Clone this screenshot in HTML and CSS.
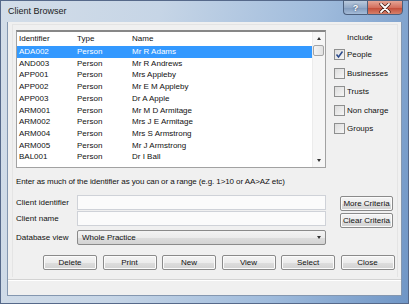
FILE: index.html
```html
<!DOCTYPE html>
<html>
<head>
<meta charset="utf-8">
<link rel="stylesheet" href="styles.css">
</head>
<body>
<div class="window">
  <div class="titlebar">
    <span class="title">Client Browser</span>
    <div class="caption">
      <div class="cap-btn help">?</div>
      <div class="cap-btn close">
        <svg width="12" height="10" viewBox="0 0 12 10"><path d="M2 1 L10 9 M10 1 L2 9" stroke="#3a1510" stroke-width="3.2" stroke-linecap="round"/><path d="M2 1 L10 9 M10 1 L2 9" stroke="#fff" stroke-width="1.8" stroke-linecap="round"/></svg>
      </div>
    </div>
  </div>
  <div class="client">
    <div class="main">
      <div class="top">
        <div class="listbox">
          <div class="list">
            <div class="head"><span class="c1">Identifier</span><span class="c2">Type</span><span class="c3">Name</span></div>
            <div class="row sel"><span class="c1">ADA002</span><span class="c2">Person</span><span class="c3">Mr R Adams</span></div>
            <div class="row"><span class="c1">AND003</span><span class="c2">Person</span><span class="c3">Mr R Andrews</span></div>
            <div class="row"><span class="c1">APP001</span><span class="c2">Person</span><span class="c3">Mrs Appleby</span></div>
            <div class="row"><span class="c1">APP002</span><span class="c2">Person</span><span class="c3">Mr E M Appleby</span></div>
            <div class="row"><span class="c1">APP003</span><span class="c2">Person</span><span class="c3">Dr A Apple</span></div>
            <div class="row"><span class="c1">ARM001</span><span class="c2">Person</span><span class="c3">Mr M D Armitage</span></div>
            <div class="row"><span class="c1">ARM002</span><span class="c2">Person</span><span class="c3">Mrs J E Armitage</span></div>
            <div class="row"><span class="c1">ARM004</span><span class="c2">Person</span><span class="c3">Mrs S Armstrong</span></div>
            <div class="row"><span class="c1">ARM005</span><span class="c2">Person</span><span class="c3">Mr J Armstrong</span></div>
            <div class="row"><span class="c1">BAL001</span><span class="c2">Person</span><span class="c3">Dr I Ball</span></div>
          </div>
          <div class="vscroll">
            <div class="sb-btn"><span class="arr up"></span></div>
            <div class="thumb"></div>
            <div class="track"></div>
            <div class="sb-btn"><span class="arr down"></span></div>
          </div>
        </div>
        <div class="include">
          <div class="inc-title">Include</div>
          <div class="checks">
            <div class="chk-row"><span class="box checked"><svg width="9" height="9" viewBox="0 0 9 9"><path d="M1.5 4.5 L3.5 7 L7.5 1.5" fill="none" stroke="#2b4a8c" stroke-width="1.5"/></svg></span><span>People</span></div>
            <div class="chk-row"><span class="box"></span><span>Businesses</span></div>
            <div class="chk-row"><span class="box"></span><span>Trusts</span></div>
            <div class="chk-row"><span class="box"></span><span>Non charge</span></div>
            <div class="chk-row"><span class="box"></span><span>Groups</span></div>
          </div>
        </div>
      </div>
      <div class="hint">Enter as much of the identifier as you can or a range (e.g. 1&gt;10 or AA&gt;AZ etc)</div>
      <div class="form">
        <div class="fields">
          <div class="field-row"><span class="lbl">Client identifier</span><div class="input"></div></div>
          <div class="field-row"><span class="lbl">Client name</span><div class="input"></div></div>
          <div class="field-row sel-row"><span class="lbl">Database view</span><div class="select"><span>Whole Practice</span><span class="arr down"></span></div></div>
        </div>
        <div class="side">
          <div class="btn side-btn">More Criteria</div>
          <div class="btn side-btn">Clear Criteria</div>
        </div>
      </div>
      <div class="buttons">
        <div class="btn">Delete</div>
        <div class="btn">Print</div>
        <div class="btn">New</div>
        <div class="btn">View</div>
        <div class="btn">Select</div>
        <div class="btn">Close</div>
      </div>
    </div>
    <div class="status"></div>
  </div>
</div>
</body>
</html>
```

FILE: styles.css
```css
* { box-sizing: border-box; }
body {
  margin: 0;
  width: 409px;
  height: 304px;
  overflow: hidden;
  font-family: "Liberation Sans", Arial, sans-serif;
  font-size: 8px;
  color: #000;
}
.window {
  width: 409px;
  height: 304px;
  border: 1px solid #56698a;
  background: linear-gradient(100deg, #d3dde8 0%, #c6d5e6 35%, #9fbbdc 70%, #7096c6 100%);
  display: flex;
  flex-direction: column;
}
.titlebar {
  height: 21px;
  display: flex;
  align-items: flex-start;
}
.title {
  margin: 5px 0 0 7px;
  font-size: 9px;
  line-height: 10px;
  color: #1b1b1b;
}
.caption {
  margin-left: auto;
  margin-right: 5px;
  margin-top: -1px;
  display: flex;
}
.cap-btn {
  height: 15px;
  border: 1px solid #4c5f7c;
  display: flex;
  align-items: center;
  justify-content: center;
}
.help {
  width: 24px;
  border-right: none;
  border-bottom-left-radius: 4px;
  background: linear-gradient(#b9c9dc, #93aac8 50%, #7f99bb 51%, #a5bcd8);
  color: #fff;
  font-weight: bold;
  font-size: 9px;
  text-shadow: 0 0 2px #2c3e5a;
}
.close {
  width: 36px;
  border-bottom-right-radius: 4px;
  background: linear-gradient(#e5a595, #d4705e 50%, #c24a36 51%, #d6806a);
}
.client {
  margin-left: 6px;
  width: 395px;
  height: 274px;
  background: #f0f0f0;
  border: 1px solid #8497b0;
  border-top: none;
  display: flex;
  flex-direction: column;
}
.main {
  flex: 1;
  padding: 8px 0 0 8px;
  background: linear-gradient(#e4e4e4, #e4e4e4) 4px 2px / 1px 253px no-repeat,
              linear-gradient(#e4e4e4, #e4e4e4) 389px 2px / 1px 253px no-repeat,
              linear-gradient(#e4e4e4, #e4e4e4) 4px 2px / 386px 1px no-repeat;
}
.top {
  display: flex;
  height: 138px;
}
.listbox {
  width: 310px;
  height: 138px;
  border: 1px solid #a2a2a2;
  border-top: 2px solid #878787;
  background: #fff;
  display: flex;
}
.list {
  flex: 1;
}
.head {
  height: 14px;
  line-height: 14px;
  display: flex;
  color: #111;
}
.row {
  height: 11.73px;
  line-height: 11.73px;
  display: flex;
  color: #111;
}
.row.sel {
  background: #3399ff;
  color: #fff;
}
.c1 { width: 60px; padding-left: 2px; }
.c2 { width: 55px; }
.vscroll {
  width: 13px;
  display: flex;
  flex-direction: column;
  background: #f6f6f6;
  border-left: 1px solid #ececec;
}
.sb-btn {
  height: 13px;
  display: flex;
  align-items: center;
  justify-content: center;
}
.arr {
  width: 0;
  height: 0;
  border-left: 2.5px solid transparent;
  border-right: 2.5px solid transparent;
}
.arr.up { border-bottom: 3px solid #333; }
.arr.down { border-top: 3px solid #333; }
.thumb {
  height: 11px;
  margin: 0 1px 0 0;
  border: 1px solid #a5a5a5;
  border-radius: 2px;
  background: linear-gradient(90deg, #f4f4f4, #e2e2e2);
}
.track {
  flex: 1;
}
.include {
  margin-left: 7px;
  flex: 1;
}
.inc-title {
  margin: 3px 0 0 14px;
  line-height: 10px;
  color: #111;
}
.checks {
  margin-top: 2.25px;
}
.chk-row {
  height: 18.5px;
  display: flex;
  align-items: center;
  color: #111;
}
.box {
  width: 11px;
  height: 11px;
  margin: 0 2px 0 1px;
  border: 1px solid #8e8f8f;
  background: linear-gradient(135deg, #dcdcdc, #f6f6f6);
  display: flex;
  align-items: center;
  justify-content: center;
}
.hint {
  margin-top: 9px;
  line-height: 10px;
  letter-spacing: -0.1px;
  color: #111;
}
.form {
  display: flex;
  margin-top: 8px;
}
.fields {
  width: 310px;
}
.field-row {
  display: flex;
  align-items: center;
  height: 15px;
  margin-bottom: 1px;
}
.field-row.sel-row {
  margin-top: 4px;
}
.lbl {
  width: 61px;
  color: #111;
}
.input {
  width: 249px;
  height: 15px;
  border: 1px solid #cfd2d8;
  background: #fbfbfb;
}
.select {
  width: 249px;
  height: 15px;
  border: 1px solid #8a8a8a;
  border-radius: 2px;
  background: linear-gradient(#f3f3f3, #ebebeb 50%, #dddddd 51%, #d3d3d3);
  display: flex;
  align-items: center;
  padding-left: 4px;
  color: #111;
}
.select .arr {
  margin-left: auto;
  margin-right: 4px;
}
.side {
  margin-left: 14px;
  margin-top: 1px;
  display: flex;
  flex-direction: column;
  gap: 2px;
}
.btn {
  width: 54px;
  height: 15px;
  border: 1px solid #8a8a8a;
  border-radius: 2px;
  background: linear-gradient(#f4f4f4, #ececec 50%, #dedede 51%, #d2d2d2);
  box-shadow: inset 0 0 0 1px #fbfbfb;
  text-align: center;
  line-height: 13px;
  color: #111;
}
.side-btn {
  width: 53px;
}
.buttons {
  display: flex;
  gap: 5.5px;
  margin-top: 9px;
  padding-left: 27px;
}
.status {
  height: 16px;
  border-top: 1px solid #d3d3d3;
  box-shadow: inset 0 1px #ffffff;
}
```
